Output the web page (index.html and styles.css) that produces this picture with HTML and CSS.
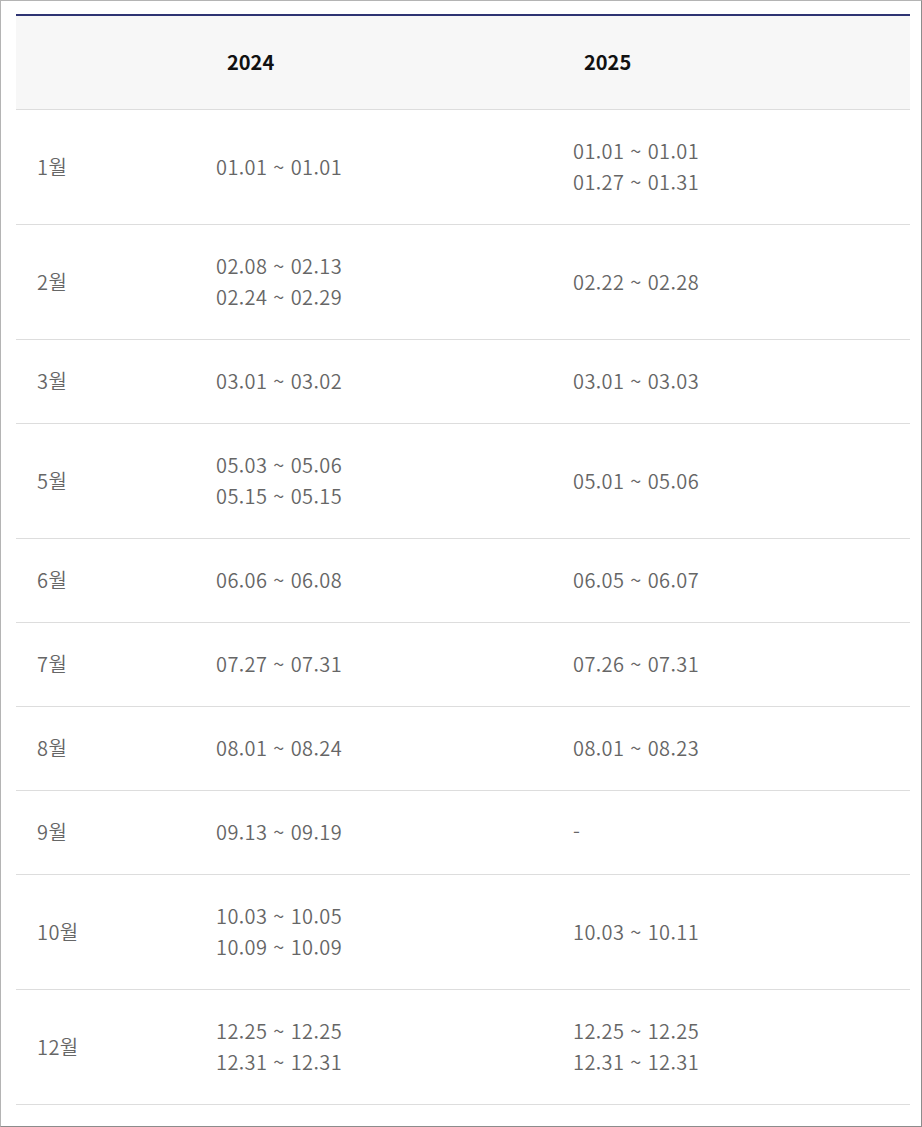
FILE: index.html
```html
<!DOCTYPE html>
<html lang="ko">
<head>
<meta charset="utf-8">
<title>휴무일</title>
<link rel="stylesheet" href="styles.css">
</head>
<body>
<div class="frame">
  <table class="holidays">
    <colgroup>
      <col class="c-month">
      <col class="c-year">
      <col class="c-year2">
    </colgroup>
    <thead>
      <tr><th></th><th>2024</th><th>2025</th></tr>
    </thead>
    <tbody>
      <tr><td>1월</td><td>01.01 ~ 01.01</td><td>01.01 ~ 01.01<br>01.27 ~ 01.31</td></tr>
      <tr><td>2월</td><td>02.08 ~ 02.13<br>02.24 ~ 02.29</td><td>02.22 ~ 02.28</td></tr>
      <tr><td>3월</td><td>03.01 ~ 03.02</td><td>03.01 ~ 03.03</td></tr>
      <tr><td>5월</td><td>05.03 ~ 05.06<br>05.15 ~ 05.15</td><td>05.01 ~ 05.06</td></tr>
      <tr><td>6월</td><td>06.06 ~ 06.08</td><td>06.05 ~ 06.07</td></tr>
      <tr><td>7월</td><td>07.27 ~ 07.31</td><td>07.26 ~ 07.31</td></tr>
      <tr><td>8월</td><td>08.01 ~ 08.24</td><td>08.01 ~ 08.23</td></tr>
      <tr><td>9월</td><td>09.13 ~ 09.19</td><td>-</td></tr>
      <tr><td>10월</td><td>10.03 ~ 10.05<br>10.09 ~ 10.09</td><td>10.03 ~ 10.11</td></tr>
      <tr><td>12월</td><td>12.25 ~ 12.25<br>12.31 ~ 12.31</td><td>12.25 ~ 12.25<br>12.31 ~ 12.31</td></tr>
    </tbody>
  </table>
</div>
</body>
</html>
```
FILE: styles.css
```css
html, body {
  margin: 0;
  padding: 0;
  background: #fff;
}
.frame {
  box-sizing: border-box;
  width: 922px;
  height: 1127px;
  border: 1px solid #b4b4b4;
  border-right-color: #8c8c8c;
  border-bottom-color: #8c8c8c;
  padding: 13px 12px 0 15px;
  font-family: "Noto Sans CJK KR", "Noto Sans", sans-serif;
}
.holidays {
  width: 894px;
  border-collapse: collapse;
  table-layout: fixed;
}
.c-month { width: 180px; }
.c-year { width: 357px; }
.c-year2 { width: 357px; }
.holidays th {
  background: #f7f7f7;
  border-top: 2px solid #2e3473;
  border-bottom: 1px solid #dddddd;
  padding: 30px 0 32px 31px;
  font-size: 20px;
  line-height: 31px;
  font-weight: 700;
  color: #111;
  text-align: left;
}
.holidays td {
  border-bottom: 1px solid #dddddd;
  padding: 25px 0 27px 20px;
  font-size: 20px;
  line-height: 31px;
  font-weight: 350;
  letter-spacing: 0.4px;
  color: #666;
  vertical-align: middle;
  text-align: left;
}
.holidays td:first-child {
  padding-left: 21px;
}
```
